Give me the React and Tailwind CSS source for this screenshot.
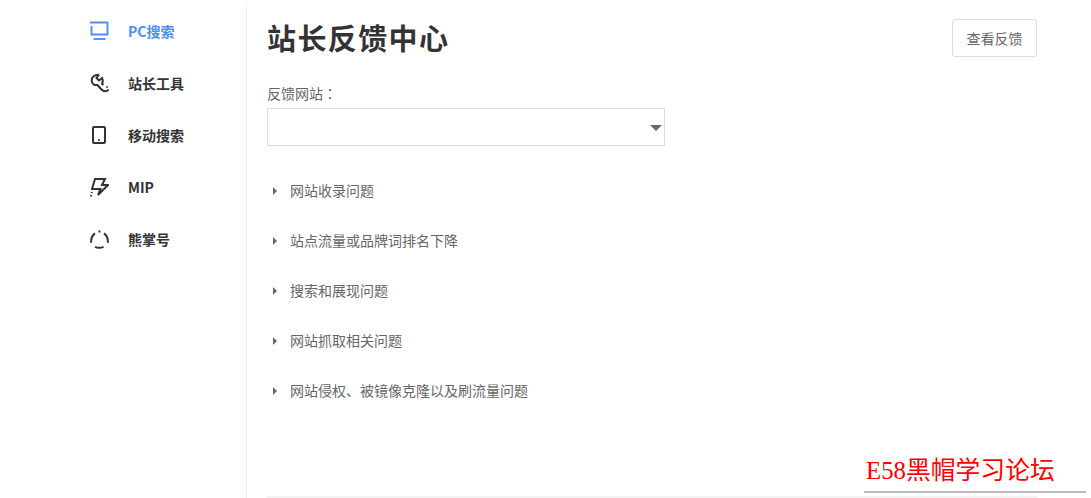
import React from 'react'

const sans = { fontFamily: '"Noto Sans CJK SC", sans-serif' }

function PcIcon(){
  return (
    <svg width="20" height="20" viewBox="0 0 20 20" fill="none" stroke="currentColor" strokeWidth="1.9">
      <path d="M2.5 5V13.5H18.5V1.5H1" />
      <path d="M4.5 18H16.5" />
    </svg>
  )
}
function ToolIcon(){
  return (
    <svg width="20" height="20" viewBox="0 0 20 20" fill="none" stroke="currentColor" strokeWidth="2">
      <path d="M10 1.8C6 1.2 2.3 4.5 2.7 8C3 11 5.5 12.5 8.5 12L12.5 16.5C14.5 18.8 18 18.8 19.5 16.5" />
      <path d="M10 1.8L7.5 5L10 7.5L13 5C14 7 14 9 13 10.5L14.5 12" />
      <path d="M17.5 13.5L18.5 14.5" />
    </svg>
  )
}
function PhoneIcon(){
  return (
    <svg width="20" height="20" viewBox="0 0 20 20" fill="none" stroke="currentColor" strokeWidth="2">
      <rect x="4" y="2" width="12" height="16" rx="1" />
      <path d="M9.2 15H10.8" />
    </svg>
  )
}
function BoltIcon(){
  return (
    <svg width="20" height="20" viewBox="0 0 20 20" fill="none" stroke="currentColor" strokeWidth="2">
      <path d="M6 2H16L13 8H19L9 18L11.5 12H3Z" />
      <path d="M3 15L2.6 16M2.2 18L2 19.5" />
    </svg>
  )
}
function CircleIcon(){
  return (
    <svg width="20" height="20" viewBox="0 0 20 20" fill="none" stroke="currentColor" strokeWidth="2">
      <path d="M6 4.3C3.4 6 2 9.5 2 13.7" />
      <path d="M6 17.7C8 19.2 12.5 19.2 14.5 17.7" />
      <path d="M15 4.3C17.6 6 19 9.5 19 13.7" />
      <path d="M10.5 1.5V3.5" />
    </svg>
  )
}

const nav = [
  { label: 'PC搜索', icon: PcIcon, active: true },
  { label: '站长工具', icon: ToolIcon },
  { label: '移动搜索', icon: PhoneIcon },
  { label: 'MIP', icon: BoltIcon },
  { label: '熊掌号', icon: CircleIcon },
]

const questions = [
  '网站收录问题',
  '站点流量或品牌词排名下降',
  '搜索和展现问题',
  '网站抓取相关问题',
  '网站侵权、被镜像克隆以及刷流量问题',
]

export default function App(){
  return (
    <div className="relative flex h-[498px] w-[1091px] overflow-hidden bg-white" style={sans}>
      <aside className="mt-[3px] flex h-[495px] w-[247px] shrink-0 flex-col border-r border-[#eeeeee] pl-[89px] pt-[2px]">
        {nav.map(item => {
          const Icon = item.icon
          return (
            <div key={item.label} className={`flex h-[52px] items-center gap-[19px] ${item.active ? 'text-[#4e8df5]' : 'text-[#333333]'}`}>
              <Icon />
              <span className="text-[14px] font-bold">{item.label}</span>
            </div>
          )
        })}
      </aside>

      <main className="w-[790px] pl-5">
        <div className="flex items-start justify-between pt-[19px]">
          <h1 className="text-[29px] font-bold leading-9 tracking-[1.4px] text-[#333333]">站长反馈中心</h1>
          <button className="h-[38px] w-[85px] rounded-[3px] border border-[#dddddd] text-[14px] text-[#666666]">查看反馈</button>
        </div>

        <div className="mt-[26px] font-['Noto_Sans_CJK_TC'] text-[14px] leading-5 text-[#666666]">反馈网站：</div>
        <div className="mt-[5px] flex h-[38px] w-[398px] items-center justify-end border border-[#dddddd] pr-[2px]">
          <span className="mt-[2px] h-0 w-0 border-x-[6px] border-t-[6px] border-x-transparent border-t-[#666666]" />
        </div>

        <ul className="mt-[19px]">
          {questions.map(q => (
            <li key={q} className="flex h-[50px] items-center gap-[13px] pl-[6px] text-[14px] text-[#666666]">
              <span className="mt-[2px] h-0 w-0 border-y-[4px] border-l-[4px] border-y-transparent border-l-[#666666]" />
              {q}
            </li>
          ))}
        </ul>

        <div className="absolute bottom-0 left-[267px] h-[2px] w-[770px] bg-[#f3f3f3]" />
      </main>

      <div className="absolute left-[864px] top-[455px] w-[222px] border-b-2 border-[#bbbbbb] pb-[5px] pl-[2px] text-[24.8px] leading-[31px] text-[#ff0000]" style={{ fontFamily: '"Liberation Serif", "Noto Sans CJK SC", serif' }}>
        E58黑帽学习论坛
      </div>
    </div>
  )
}
